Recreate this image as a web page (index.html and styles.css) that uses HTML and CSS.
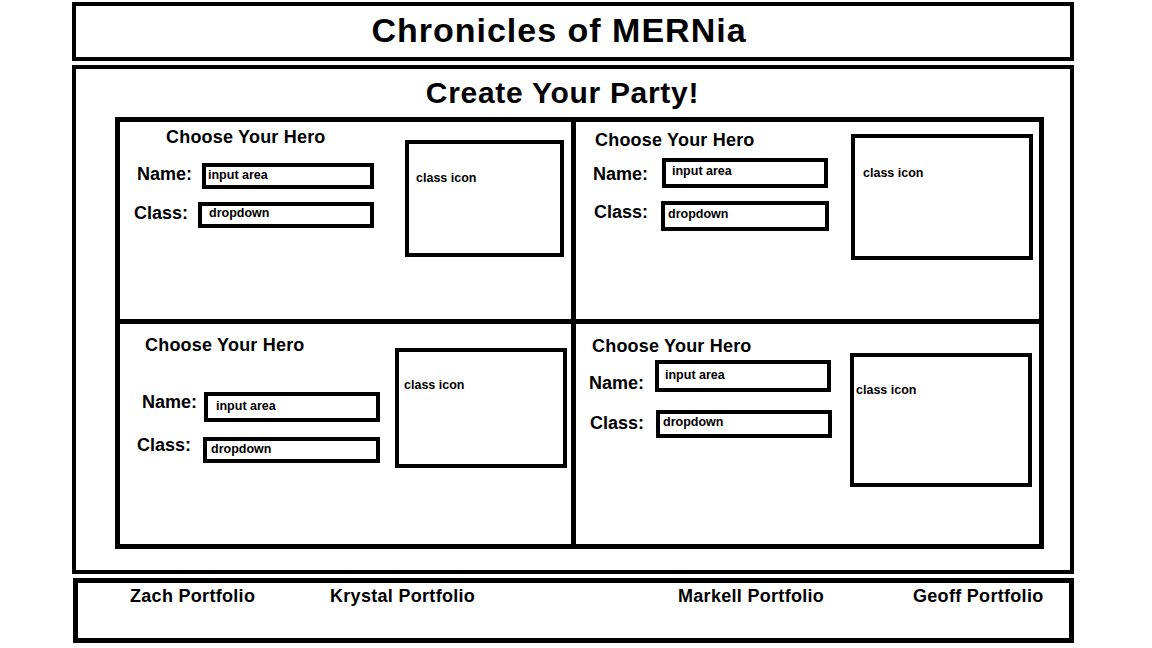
FILE: index.html
```html
<!DOCTYPE html>
<html>
    <head>
        <meta charset="utf-8">
        <title>Chronicles of MERNia</title>
        <meta name="viewport" content="width=device-width, initial-scale=1">
        <link rel="stylesheet" href="styles.css">
    </head>
    <body>
        <div class="page">
            <header class="title-bar">
                <h1>Chronicles of MERNia</h1>
            </header>
            <main class="party">
                <h2 class="party-title">Create Your Party!</h2>
                <div class="party-grid">
                    <section class="hero hero-a">
                        <div class="hero-form">
                            <h3 class="hero-title">Choose Your Hero</h3>
                            <div class="field field-name">
                                <span class="field-label">Name:</span>
                                <div class="field-box">input area</div>
                            </div>
                            <div class="field field-class">
                                <span class="field-label">Class:</span>
                                <div class="field-box">dropdown</div>
                            </div>
                        </div>
                        <div class="class-icon">class icon</div>
                    </section>
                    <section class="hero hero-b">
                        <div class="hero-form">
                            <h3 class="hero-title">Choose Your Hero</h3>
                            <div class="field field-name">
                                <span class="field-label">Name:</span>
                                <div class="field-box">input area</div>
                            </div>
                            <div class="field field-class">
                                <span class="field-label">Class:</span>
                                <div class="field-box">dropdown</div>
                            </div>
                        </div>
                        <div class="class-icon">class icon</div>
                    </section>
                    <section class="hero hero-c">
                        <div class="hero-form">
                            <h3 class="hero-title">Choose Your Hero</h3>
                            <div class="field field-name">
                                <span class="field-label">Name:</span>
                                <div class="field-box">input area</div>
                            </div>
                            <div class="field field-class">
                                <span class="field-label">Class:</span>
                                <div class="field-box">dropdown</div>
                            </div>
                        </div>
                        <div class="class-icon">class icon</div>
                    </section>
                    <section class="hero hero-d">
                        <div class="hero-form">
                            <h3 class="hero-title">Choose Your Hero</h3>
                            <div class="field field-name">
                                <span class="field-label">Name:</span>
                                <div class="field-box">input area</div>
                            </div>
                            <div class="field field-class">
                                <span class="field-label">Class:</span>
                                <div class="field-box">dropdown</div>
                            </div>
                        </div>
                        <div class="class-icon">class icon</div>
                    </section>
                </div>
            </main>
            <footer class="links">
                <a href="#">Zach Portfolio</a>
                <a href="#">Krystal Portfolio</a>
                <a href="#">Markell Portfolio</a>
                <a href="#">Geoff Portfolio</a>
            </footer>
        </div>
    </body>
</html>
```

FILE: styles.css
```css
*{margin:0;padding:0;box-sizing:border-box}
body{
    background:#fff;
    color:#000;
    font-family:"Liberation Sans",Arial,sans-serif;
    font-weight:bold;
}
.page{
    width:1002px;
    margin-left:72px;
    padding-top:2px;
}

/* header */
.title-bar{
    height:59px;
    border:4px solid #000;
}
.title-bar h1{
    padding:7px 28px 0 0;
    font-size:34px;
    line-height:34px;
    letter-spacing:1px;
    text-align:center;
}

/* party box */
.party{
    height:509px;
    margin-top:4px;
    border:4px solid #000;
}
.party-title{
    padding:9px 21px 0 0;
    margin-bottom:9px;
    font-size:30px;
    line-height:30px;
    letter-spacing:.7px;
    text-align:center;
}
.party-grid{
    display:grid;
    grid-template-columns:451px 463px;
    grid-template-rows:197px 220px;
    gap:5px;
    width:929px;
    margin-left:39px;
    padding:5px;
    background:#000;
}
.hero{
    display:flex;
    align-items:flex-start;
    background:#fff;
}
.hero-form{
    flex:none;
    width:260px;
}
.hero-title{
    font-size:18px;
    line-height:20px;
    letter-spacing:.2px;
}
.field{
    display:flex;
    align-items:flex-start;
}
.field-label{
    flex:none;
    font-size:18px;
    line-height:20px;
}
.field-box,.class-icon{
    flex:none;
    border:4px solid #000;
    font-size:12.5px;
    line-height:14px;
}

/* hero a */
.hero-a .hero-title{margin:5px 0 0 46px}
.hero-a .field-name{margin-top:16px}
.hero-a .field-name .field-label{margin:1px 0 0 17px;width:65px}
.hero-a .field-name .field-box{width:172px;height:26px;padding:1px 0 0 2px}
.hero-a .field-class{margin-top:13px}
.hero-a .field-class .field-label{margin:1px 0 0 14px;width:64px}
.hero-a .field-class .field-box{width:176px;height:26px;padding:0 0 0 7px}
.hero-a .class-icon{width:159px;height:117px;margin:18px 0 0 25px;padding:27px 0 0 7px}

/* hero b */
.hero-b .hero-title{margin:8px 0 0 19px}
.hero-b .field-name{margin-top:8px}
.hero-b .field-name .field-label{margin:6px 0 0 17px;width:69px}
.hero-b .field-name .field-box{width:166px;height:30px;padding:2px 0 0 6px}
.hero-b .field-class{margin-top:13px}
.hero-b .field-class .field-label{margin:1px 0 0 18px;width:67px}
.hero-b .field-class .field-box{width:168px;height:30px;padding:2px 0 0 3px}
.hero-b .class-icon{width:182px;height:126px;margin:12px 0 0 15px;padding:28px 0 0 8px}

/* hero c */
.hero-c .hero-title{margin:11px 0 0 25px}
.hero-c .field-name{margin-top:37px}
.hero-c .field-name .field-label{margin:0 0 0 22px;width:62px}
.hero-c .field-name .field-box{width:176px;height:30px;padding:3px 0 0 8px}
.hero-c .field-class{margin-top:15px}
.hero-c .field-class .field-label{margin:-2px 0 0 17px;width:66px}
.hero-c .field-class .field-box{width:177px;height:26px;padding:1px 0 0 4px}
.hero-c .class-icon{width:172px;height:120px;margin:24px 0 0 15px;padding:26px 0 0 5px}

/* hero d */
.hero-d .hero-title{margin:12px 0 0 16px}
.hero-d .field-name{margin-top:4px}
.hero-d .field-name .field-label{margin:13px 0 0 13px;width:66px}
.hero-d .field-name .field-box{width:176px;height:32px;padding:4px 0 0 6px}
.hero-d .field-class{margin-top:17px}
.hero-d .field-class .field-label{margin:3px 0 0 14px;width:66px}
.hero-d .field-class .field-box{width:176px;height:28px;padding:1px 0 0 3px}
.hero-d .class-icon{width:182px;height:134px;margin:29px 0 0 14px;padding:26px 0 0 2px}

/* footer */
.links{
    display:grid;
    grid-template-columns:200px 348px 235px auto;
    height:65px;
    margin:4px 0 0 1px;
    padding:3px 0 0 52px;
    border:5px solid #000;
}
.links a{
    color:#000;
    text-decoration:none;
    font-size:18px;
    line-height:20px;
    letter-spacing:.3px;
}
```
